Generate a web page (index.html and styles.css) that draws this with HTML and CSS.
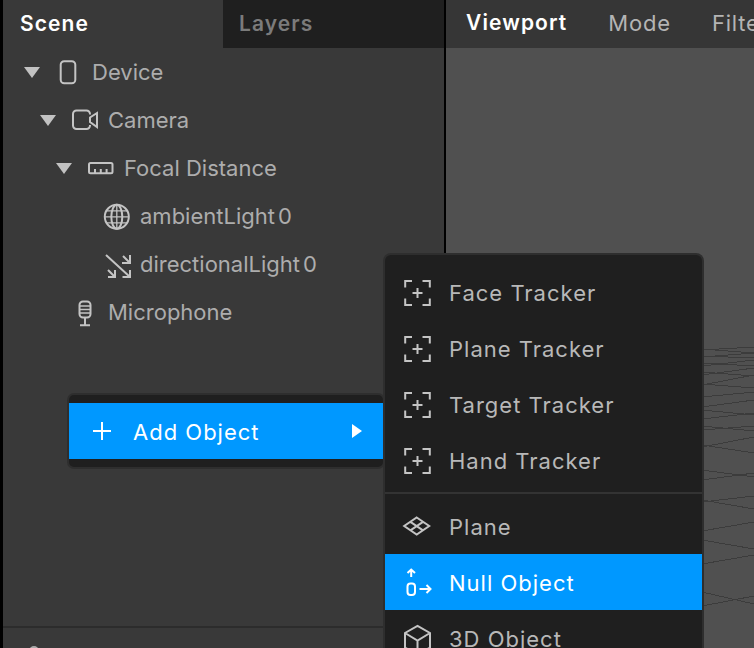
FILE: index.html
```html
<!DOCTYPE html>
<html lang="en">
<head>
<meta charset="utf-8">
<title>Scene editor</title>
<link rel="stylesheet" href="styles.css">
</head>
<body>
<div class="app">
  <aside class="panel">
    <div class="tabs">
      <div class="tab tab-active">Scene</div>
      <div class="tab tab-idle">Layers</div>
    </div>
    <ul class="tree">
      <li class="row depth-0"><span class="arrow"></span>
        <svg class="icon" viewBox="0 0 28 28"><rect x="4.700" y="3.200" width="14.600" height="22" rx="3.500"/></svg>
        <span>Device</span></li>
      <li class="row depth-1"><span class="arrow"></span>
        <svg class="icon" viewBox="0 0 28 28"><path d="M18 8.500V8a3.500 3.500 0 0 0-3.500-3.500H4.500A3.500 3.500 0 0 0 1 8v11.500A3.500 3.500 0 0 0 4.500 23h10A3.500 3.500 0 0 0 18 19.500V19M18 11.500v4.500l7 5V7l-7 4.500z"/></svg>
        <span>Camera</span></li>
      <li class="row depth-2"><span class="arrow"></span>
        <svg class="icon" viewBox="0 0 28 28"><rect x="1" y="9" width="23.500" height="10.200" rx="1.500"/><path d="M7 19v-4M12.800 19v-4M18.600 19v-4"/></svg>
        <span>Focal Distance</span></li>
      <li class="row depth-3"><span class="arrow arrow-none"></span>
        <svg class="icon" viewBox="0 0 28 28"><circle cx="12.800" cy="14.800" r="12"/><ellipse cx="12.800" cy="14.800" rx="5.500" ry="12"/><path class="thin" d="M12.800 2.800v24M.8 14.800h24M2.600 8.800h20.400M2.600 20.800h20.400"/></svg>
        <span>ambientLight<span class="digit">0</span></span></li>
      <li class="row depth-3"><span class="arrow arrow-none"></span>
        <svg class="icon" viewBox="0 0 28 28"><path d="M2 5l24 22M26 20v7h-7.500M19 6l7 7M26 5v8h-8M4 20l7 7M11 20v7H4"/></svg>
        <span>directionalLight<span class="digit">0</span></span></li>
      <li class="row depth-1"><span class="arrow arrow-none"></span>
        <svg class="icon" viewBox="0 0 28 28"><rect x="7.500" y="3.500" width="11" height="16" rx="3.500"/><path class="thin" d="M7.500 8h11M7.500 11.500h11M7.500 15h11"/><path d="M13 20v7M8 27.200h10"/></svg>
        <span>Microphone</span></li>
    </ul>
    <div class="panel-foot"><span class="foot-dot"></span></div>
  </aside>
  <main class="view">
    <nav class="view-tabs">
      <span class="vt vt-active">Viewport</span>
      <span class="vt">Mode</span>
      <span class="vt">Filter</span>
    </nav>
    <div class="canvas">
      <svg class="grid" viewBox="0 0 52 303">
        <g>
          <path d="M0 5L52 2M0 12L52 8M0 21L52 15M0 30L52 23M0 40L52 30M0 4L52 8M0 11L52 13M0 18L52 21M0 27L52 31M0 39L52 43M0 52L52 47M0 62L52 55M0 74L52 68M0 85L52 81M0 102L52 92M0 65L52 70M0 81L52 86M0 100L52 108M0 125L52 132M0 135L52 128M0 157L52 151M0 155L52 164M0 186L52 177M0 195L52 204M0 219L52 210M0 247L52 259M0 261L52 251"/>
        </g>
      </svg>
    </div>
  </main>
</div>

<div class="menu menu-add">
  <div class="menu-item is-hot add-item">
    <svg class="plus" viewBox="0 0 20 20"><path d="M10 1v18M1 10h18"/></svg>
    <span class="add-label">Add Object</span>
    <span class="caret"></span>
  </div>
</div>

<div class="menu menu-sub">
  <div class="menu-item">
    <svg class="icon" viewBox="0 0 28 28"><use href="#tracker"/></svg><span>Face Tracker</span>
  </div>
  <div class="menu-item">
    <svg class="icon" viewBox="0 0 28 28"><use href="#tracker"/></svg><span>Plane Tracker</span>
  </div>
  <div class="menu-item">
    <svg class="icon" viewBox="0 0 28 28"><use href="#tracker"/></svg><span>Target Tracker</span>
  </div>
  <div class="menu-item">
    <svg class="icon" viewBox="0 0 28 28"><use href="#tracker"/></svg><span>Hand Tracker</span>
  </div>
  <div class="divider"></div>
  <div class="menu-item lower">
    <svg class="icon" viewBox="0 0 28 28"><path d="M12.700 4.500L25.200 13 12.700 21.500 .2 13zM6.400 8.800L19 17.300M19 8.800L6.400 17.300"/></svg><span>Plane</span>
  </div>
  <div class="menu-item lower is-hot">
    <svg class="icon" viewBox="0 0 28 28"><rect x="3.500" y="14.500" width="7.500" height="11.500" rx="3"/><path d="M7.200 8V.5M3.500 4l3.700-3.500L11 4M15.500 20h10.500M22.500 16l4 4-4 4"/></svg><span>Null Object</span>
  </div>
  <div class="menu-item lower">
    <svg class="icon" viewBox="0 0 28 28"><path d="M13.500 .8L26 8v14.500l-12.500 7.500L1 22.500V8zM1 8l12.500 7.500L26 8M13.500 15.500V30"/></svg><span>3D Object</span>
  </div>
</div>

<svg class="defs" width="0" height="0">
  <defs>
    <g id="tracker">
      <path d="M8 2H1.200V8.500M18.500 2h7.300V8.500M8 26H1.200V19.500M18.500 26h7.300V19.500M13.500 9v10M8.500 14h10"/>
    </g>
  </defs>
</svg>
</body>
</html>
```

FILE: styles.css
```css
* { box-sizing: border-box; }
html, body { margin: 0; height: 100%; overflow: hidden; background: #505050; }
body {
  position: relative;
  width: 754px;
  height: 648px;
  font-family: Inter, "Liberation Sans", sans-serif;
  font-size: 22px;
  letter-spacing: 1px;
  color: #b4b4b4;
}
svg { display: block; }
.defs { position: absolute; }

.app { display: flex; height: 648px; }

.panel {
  width: 446px;
  flex: none;
  display: flex;
  flex-direction: column;
  background: #393939;
  border-left: 3px solid #000;
  border-right: 2px solid #000;
}
.tabs { display: flex; height: 48px; flex: none; }
.tab { display: flex; align-items: center; font-size: 21px; letter-spacing: 1.1px; font-weight: 600; padding-left: 17px; flex: 0 0 220px; padding-bottom: 2px; }
.tab-active { color: #fff; }
.tab-idle { flex: 1; padding-left: 16px; color: #7b7b7b; background: #1f1f1f; }

.tree { list-style: none; margin: 0; padding: 0; flex: 1; }
.row { display: flex; align-items: center; height: 48px; color: #adadad; letter-spacing: 0; }
.digit { margin-left: 3px; }
.depth-0 { padding-left: 21px; }
.depth-1 { padding-left: 37px; }
.depth-2 { padding-left: 53px; }
.depth-3 { padding-left: 69px; }
.arrow {
  flex: none;
  width: 0; height: 0;
  margin-right: 16px;
  border-left: 8px solid transparent;
  border-right: 8px solid transparent;
  border-top: 11px solid #c2c2c2;
}
.arrow-none { border-top-color: transparent; }

.icon {
  flex: none;
  width: 28px; height: 28px;
  margin-right: 8px;
  fill: none;
  stroke: #c4c4c4;
  stroke-width: 2;
  overflow: visible;
}
.icon .thin { stroke-width: 1.300; }

.panel-foot { height: 22px; flex: none; border-top: 2px solid #2c2c2c; position: relative; }
.foot-dot { position: absolute; left: 26px; top: 18px; width: 10px; height: 10px; border-radius: 50%; background: #aaa; }

.view { flex: 1; min-width: 0; display: flex; flex-direction: column; background: #505050; }
.view-tabs { display: flex; align-items: center; gap: 41px; height: 48px; flex: none; padding: 0 0 3px 20px; background: #363636; white-space: nowrap; overflow: hidden; letter-spacing: .8px; }
.vt-active { color: #fff; font-weight: 600; font-size: 21px; letter-spacing: 1.1px; }
.canvas { flex: 1; position: relative; }
.grid { position: absolute; left: 256px; top: 297px; width: 52px; height: 303px; fill: none; stroke: #3c3c3c; stroke-width: 1; shape-rendering: crispEdges; }

.menu {
  position: absolute;
  background: #1f1f1f;
  box-shadow: 0 0 0 2px #2e2e2e;
}
.menu-add { left: 69px; top: 395px; width: 314px; padding: 8px 0; border-radius: 5px; }
.menu-sub { left: 385px; top: 255px; width: 317px; padding-top: 10px; border-radius: 6px 6px 0 0; height: 420px; }

.menu-item { display: flex; align-items: center; height: 56px; padding-left: 19px; color: #b8b8b8; }
.menu-item .icon { margin-right: 17px; }
.lower { padding-top: 2px; }
.is-hot { background: #0098ff; color: #fff; }
.is-hot .icon { stroke: #fff; }
.divider { height: 2px; margin: 3px 0 4px; background: #333; }

.add-item { padding-left: 23px; }
.plus { width: 20px; height: 20px; flex: none; fill: none; stroke: #fff; stroke-width: 2; margin-right: 21px; }
.add-label { flex: 1; padding-top: 2px; }
.caret {
  flex: none;
  width: 0; height: 0;
  margin-right: 21px;
  border-top: 7.500px solid transparent;
  border-bottom: 7.500px solid transparent;
  border-left: 10px solid #fff;
}
```
